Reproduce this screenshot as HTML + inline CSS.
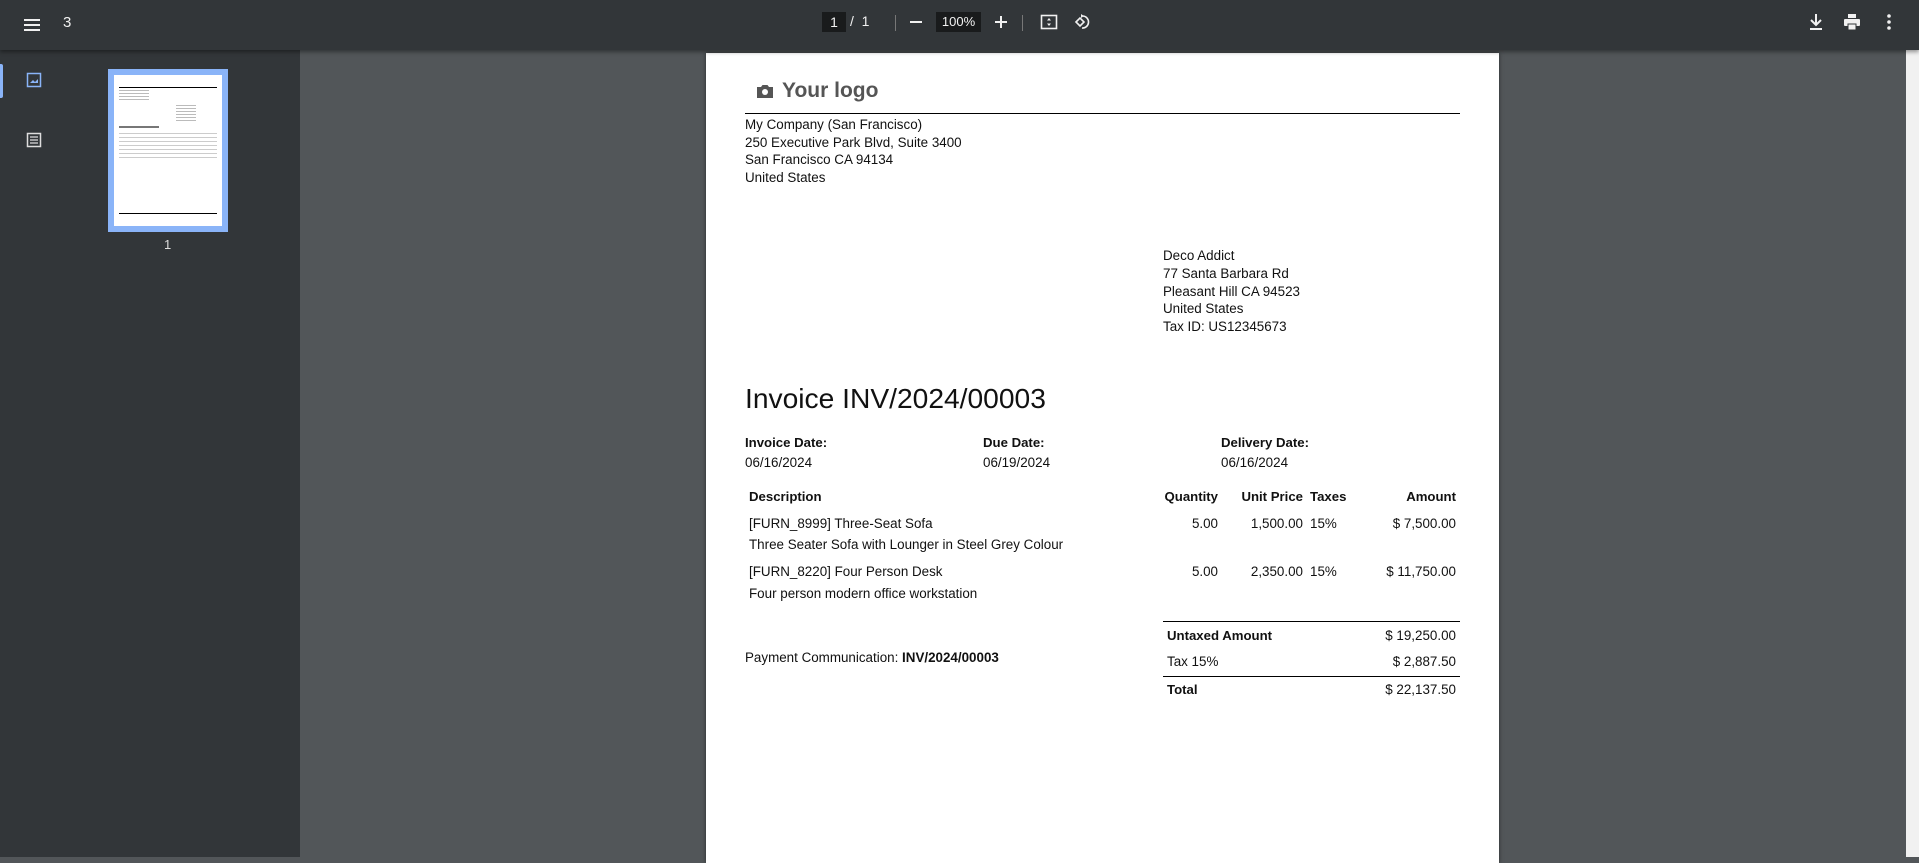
<!DOCTYPE html>
<html><head><meta charset="utf-8"><style>
*{margin:0;padding:0;box-sizing:border-box}
body{width:1919px;height:857px;overflow:hidden;background:#525659;font-family:"Liberation Sans",sans-serif;position:relative}
.tb{position:absolute;left:0;top:0;width:1919px;height:50px;background:#323639;box-shadow:0 2px 4px rgba(0,0,0,.4);z-index:3;color:#f1f1f1;font-size:14px}
.side{position:absolute;left:0;top:50px;width:300px;height:807px;background:#323639}
.ab{position:absolute}
.page{position:absolute;left:706px;top:53px;width:793px;height:810px;background:#fff;box-shadow:0 0 4px rgba(0,0,0,.5);color:#111;font-family:"Liberation Sans",sans-serif;font-size:13.4px}
.page div{position:absolute;white-space:nowrap}
.b{font-weight:bold}
.r{text-align:right}
</style></head><body>
<div class="tb">
  <svg class="ab" style="left:22px;top:15px" width="20" height="20" viewBox="0 0 20 20"><path d="M2 5h16M2 10h16M2 15h16" stroke="#f1f1f1" stroke-width="2"/></svg>
  <div class="ab" style="left:63px;top:14px;font-size:15px">3</div>
  <div class="ab" style="left:822px;top:12px;width:24px;height:20px;background:#191b1c;text-align:center;line-height:20px;font-size:14px">1</div>
  <div class="ab" style="left:850px;top:13px;font-size:14px">/&nbsp;&nbsp;1</div>
  <div class="ab" style="left:895px;top:15px;width:1px;height:16px;background:#777"></div>
  <div class="ab" style="left:910px;top:21px;width:12px;height:2px;background:#f1f1f1"></div>
  <div class="ab" style="left:936px;top:12px;width:45px;height:20px;background:#191b1c;text-align:center;line-height:20px;font-size:13px">100%</div>
  <svg class="ab" style="left:994px;top:15px" width="14" height="14"><path d="M7 1v12M1 7h12" stroke="#f1f1f1" stroke-width="2"/></svg>
  <div class="ab" style="left:1022px;top:15px;width:1px;height:16px;background:#777"></div>
  <svg class="ab" style="left:1040px;top:13px" width="18" height="18" viewBox="0 0 18 18"><rect x="1.5" y="2.5" width="15" height="13" fill="none" stroke="#f1f1f1" stroke-width="1.6"/><path d="M9 5l-2 2.5h4zM9 13l-2-2.5h4z" fill="#f1f1f1"/></svg>
  <svg class="ab" style="left:1073px;top:12px" width="20" height="20" viewBox="0 0 20 20"><path d="M3 10l4-4 4 4-4 4z" fill="none" stroke="#f1f1f1" stroke-width="1.6"/><path d="M10 4a6 6 0 1 1-1 12" fill="none" stroke="#f1f1f1" stroke-width="1.6"/><path d="M8 2l3 2-3 2z" fill="#f1f1f1"/></svg>
  <svg class="ab" style="left:1808px;top:13px" width="16" height="18"><path d="M8 1v10M3 7l5 5 5-5M2 16h12" stroke="#f1f1f1" stroke-width="2" fill="none"/></svg>
  <svg class="ab" style="left:1843px;top:13px" width="18" height="18" viewBox="0 0 18 18"><rect x="5" y="1" width="8" height="4" fill="#f1f1f1"/><rect x="1" y="6" width="16" height="7" rx="1" fill="#f1f1f1"/><rect x="5" y="11" width="8" height="6" fill="#f1f1f1" stroke="#323639" stroke-width="1"/></svg>
  <svg class="ab" style="left:1886px;top:13px" width="6" height="18"><circle cx="3" cy="3" r="1.8" fill="#f1f1f1"/><circle cx="3" cy="9" r="1.8" fill="#f1f1f1"/><circle cx="3" cy="15" r="1.8" fill="#f1f1f1"/></svg>
</div>
<div class="side">
  <div class="ab" style="left:0;top:14px;width:3px;height:34px;background:#8ab4f8;border-radius:0 2px 2px 0"></div>
  <svg class="ab" style="left:26px;top:22px" width="16" height="16"><rect x="1.5" y="1.5" width="13" height="13" fill="none" stroke="#8ab4f8" stroke-width="1.5"/><path d="M4 11l3-3 2 2 3-3v4z" fill="#8ab4f8"/></svg>
  <svg class="ab" style="left:26px;top:82px" width="16" height="16"><rect x="1.5" y="1.5" width="13" height="13" fill="none" stroke="#ddd" stroke-width="1.5"/><path d="M4 5h8M4 8h8M4 11h8" stroke="#ddd" stroke-width="1.3"/></svg>
  <div class="ab" style="left:108px;top:19px;width:120px;height:163px;background:#8ab4f8;padding:6px">
    <div style="width:108px;height:151px;background:#fff;position:relative">
      <div class="ab" style="left:5px;top:12px;width:98px;height:1px;background:#000"></div>
      <div class="ab" style="left:5px;top:15px;width:30px;height:10px;background:repeating-linear-gradient(#bbb 0 1px,#fff 1px 3px)"></div>
      <div class="ab" style="left:62px;top:30px;width:20px;height:16px;background:repeating-linear-gradient(#bbb 0 1px,#fff 1px 3px)"></div>
      <div class="ab" style="left:5px;top:51px;width:40px;height:2px;background:#777"></div>
      <div class="ab" style="left:5px;top:58px;width:98px;height:28px;background:repeating-linear-gradient(#ccc 0 1px,#fff 1px 4px)"></div>
      <div class="ab" style="left:5px;top:138px;width:98px;height:1px;background:#000"></div>
    </div>
  </div>
  <div class="ab" style="left:164px;top:187px;color:#ddd;font-size:13px">1</div>
</div>
<div class="ab" style="left:1906px;top:50px;width:13px;height:807px;background:#f1f1f1"></div>
<div class="page">
  <svg class="ab" style="left:50px;top:30px" width="18" height="16" viewBox="0 0 18 16"><path d="M1 4h4l1.5-2h5L13 4h4v11H1z" fill="#555"/><circle cx="9" cy="9" r="3" fill="#fff"/></svg>
  <div style="left:76px;top:26px;font-size:21px;font-weight:bold;color:#555">Your logo</div>
  <div style="left:39px;top:60px;width:715px;height:1px;background:#000"></div>
  <div style="left:39px;top:63px;line-height:17.5px">My Company (San Francisco)<br>250 Executive Park Blvd, Suite 3400<br>San Francisco CA 94134<br>United States</div>
  <div style="left:457px;top:194px;line-height:17.8px">Deco Addict<br>77 Santa Barbara Rd<br>Pleasant Hill CA 94523<br>United States<br>Tax ID: US12345673</div>
  <div style="left:39px;top:329px;font-size:28.2px">Invoice INV/2024/00003</div>
  <div class="b" style="left:39px;top:382px;font-size:13.2px">Invoice Date:</div>
  <div style="left:39px;top:402px">06/16/2024</div>
  <div class="b" style="left:277px;top:382px;font-size:13.2px">Due Date:</div>
  <div style="left:277px;top:402px">06/19/2024</div>
  <div class="b" style="left:515px;top:382px;font-size:13.2px">Delivery Date:</div>
  <div style="left:515px;top:402px">06/16/2024</div>
  <div class="b" style="left:43px;top:436px;font-size:13.2px">Description</div>
  <div class="b r" style="right:281px;top:436px;font-size:13.2px">Quantity</div>
  <div class="b r" style="right:196px;top:436px;font-size:13.2px">Unit Price</div>
  <div class="b" style="left:604px;top:436px;font-size:13.2px">Taxes</div>
  <div class="b r" style="right:43px;top:436px;font-size:13.2px">Amount</div>
  <div style="left:43px;top:463px">[FURN_8999] Three-Seat Sofa</div>
  <div style="left:43px;top:484px">Three Seater Sofa with Lounger in Steel Grey Colour</div>
  <div class="r" style="right:281px;top:463px">5.00</div>
  <div class="r" style="right:196px;top:463px">1,500.00</div>
  <div style="left:604px;top:463px">15%</div>
  <div class="r" style="right:43px;top:463px">$ 7,500.00</div>
  <div style="left:43px;top:511px">[FURN_8220] Four Person Desk</div>
  <div style="left:43px;top:533px">Four person modern office workstation</div>
  <div class="r" style="right:281px;top:511px">5.00</div>
  <div class="r" style="right:196px;top:511px">2,350.00</div>
  <div style="left:604px;top:511px">15%</div>
  <div class="r" style="right:43px;top:511px">$ 11,750.00</div>
  <div style="left:457px;top:568px;width:297px;height:1px;background:#000"></div>
  <div class="b" style="left:461px;top:575px;font-size:13.2px">Untaxed Amount</div>
  <div class="r" style="right:43px;top:575px">$ 19,250.00</div>
  <div style="left:39px;top:597px">Payment Communication: <b>INV/2024/00003</b></div>
  <div style="left:461px;top:601px">Tax 15%</div>
  <div class="r" style="right:43px;top:601px">$ 2,887.50</div>
  <div style="left:457px;top:623px;width:297px;height:1px;background:#000"></div>
  <div class="b" style="left:461px;top:629px;font-size:13.2px">Total</div>
  <div class="r" style="right:43px;top:629px">$ 22,137.50</div>
</div>
</body></html>
